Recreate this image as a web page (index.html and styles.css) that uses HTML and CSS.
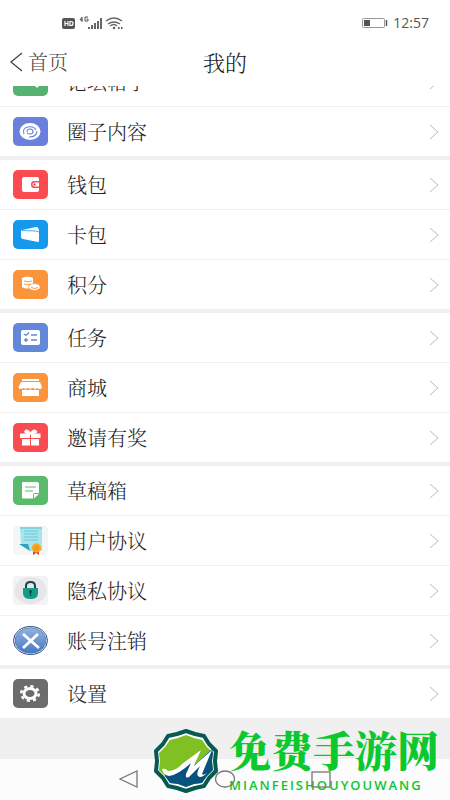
FILE: index.html
```html
<!DOCTYPE html>
<html lang="zh-CN">
<head>
<meta charset="utf-8">
<meta name="viewport" content="width=device-width, initial-scale=1">
<title>我的</title>
<link rel="stylesheet" href="styles.css">
</head>
<body>
<div class="screen">
  <div class="status">
    <svg class="signals" viewBox="0 0 62 16" aria-hidden="true">
      <rect x="0" y="2" width="13" height="11" rx="2" fill="#555"/>
      <path d="M3 5v5M6 5v5M3 7.5h3M8 5.5v4h1q2 0 2-2t-2-2z" fill="none" stroke="#fff" stroke-width="1.2"/>
      <path d="M20 1l-2 3h3M20 1v5M26 1h-3v4h3v-2h-1.500" fill="none" stroke="#555" stroke-width="1"/>
      <path d="M27 13v-2M30 13v-4M33 13v-6M36 13v-8M39 13V2" stroke="#666" stroke-width="2"/>
      <path d="M44 5q8-6 16 0M46 8q6-4 12 0M48 10q4-3 7 0" fill="none" stroke="#666" stroke-width="1.400"/>
      <circle cx="52" cy="12" r="1.200" fill="#555"/><path d="M56 12h1.500M59 12h1.500" stroke="#555" stroke-width="2"/>
    </svg>
    <div class="clock">
      <svg class="battery" viewBox="0 0 26 12" aria-hidden="true"><rect x=".5" y="1.500" width="22" height="9" rx="1" fill="none" stroke="#999"/><rect x="2" y="3" width="6" height="6" fill="#555"/><path d="M24.500 3v6" stroke="#555" stroke-width="1.500"/></svg>
      <span>12:57</span>
    </div>
  </div>
  <header class="bar">
    <a class="back" href="#"><svg viewBox="0 0 13 20" aria-hidden="true"><path d="M12 1L1 10l11 9" fill="none" stroke="#444" stroke-width="1.300"/></svg>首页</a>
    <h1>我的</h1>
  </header>
  <main class="list">
    <nav class="group scrolled">
      <a class="row" href="#"><svg class="icon" viewBox="0 0 35 29"><rect width="35" height="29" rx="5" fill="#56b271"/><path d="M9 6h17v13l-2 2-2-2H9z" fill="#fff"/></svg><span>论坛帖子</span><svg class="arrow" viewBox="0 0 10 16"><path d="M1 1l8 7-8 7"/></svg></a>
      <a class="row" href="#"><svg class="icon" viewBox="0 0 35 29"><rect width="35" height="29" rx="5" fill="#6a80dc"/><ellipse cx="17" cy="14.500" rx="10.500" ry="8.500" fill="#fff"/><path d="M11 17q-2-6 4-7 6-1 8 3M24 14q0 6-8 6M14 15q0-3 3-3t3 2.500-3 2.500q-2 0-3-1" fill="none" stroke="#6a80dc" stroke-width="1.100"/></svg><span>圈子内容</span><svg class="arrow" viewBox="0 0 10 16"><path d="M1 1l8 7-8 7"/></svg></a>
    </nav>
    <nav class="group">
      <a class="row" href="#"><svg class="icon" viewBox="0 0 35 29"><rect width="35" height="29" rx="5" fill="#fa4b50"/><rect x="9" y="7" width="17" height="15" rx="2" fill="#fff"/><path d="M27 11h-6q-3 0-3 3.500t3 3.500h6z" fill="#fa4b50"/><path d="M26 12.500h-4.500q-2 0-2 2t2 2H26z" fill="#fff"/><circle cx="21.500" cy="14.500" r="1.200" fill="#fa4b50"/></svg><span>钱包</span><svg class="arrow" viewBox="0 0 10 16"><path d="M1 1l8 7-8 7"/></svg></a>
      <a class="row" href="#"><svg class="icon" viewBox="0 0 35 29"><rect width="35" height="29" rx="5" fill="#1698ec"/><path d="M9 10l14-3q2-.5 2 1l1 2v11q0 1-1 1L10 19q-2 0-2-2v-6q0-1 1-1z" fill="#fff"/><path d="M9 10.500l14 .5 3 1" fill="none" stroke="#1698ec" stroke-width=".8"/></svg><span>卡包</span><svg class="arrow" viewBox="0 0 10 16"><path d="M1 1l8 7-8 7"/></svg></a>
      <a class="row" href="#"><svg class="icon" viewBox="0 0 35 29"><rect width="35" height="29" rx="5" fill="#fb943b"/><path d="M9 8q6-3 11 0v9q-6 3-11 0z" fill="#fff"/><path d="M11 11q4 1.500 8 0M11 14q4 1.500 7 0" fill="none" stroke="#fb943b" stroke-width=".9"/><path d="M16 15.500q5.500-4 11 0v3q-5.500 4-11 0z" fill="#fff" stroke="#fb943b" stroke-width=".7"/><path d="M18 17.500q4 2 7 0" fill="none" stroke="#fb943b"/></svg><span>积分</span><svg class="arrow" viewBox="0 0 10 16"><path d="M1 1l8 7-8 7"/></svg></a>
    </nav>
    <nav class="group">
      <a class="row" href="#"><svg class="icon" viewBox="0 0 35 29"><rect width="35" height="29" rx="5" fill="#6388d9"/><rect x="8" y="7" width="19" height="15" rx="2" fill="#fff"/><path d="M11 11l2 1.500 3-3M18 12h6M18 17h6" fill="none" stroke="#6388d9" stroke-width="1.300"/><circle cx="13" cy="17" r="1.800" fill="#6388d9"/></svg><span>任务</span><svg class="arrow" viewBox="0 0 10 16"><path d="M1 1l8 7-8 7"/></svg></a>
      <a class="row" href="#"><svg class="icon" viewBox="0 0 35 29"><rect width="35" height="29" rx="5" fill="#fb943b"/><path d="M9 6h17v2H9zM8 9h19l2 5q0 2-2 2t-3-1q-2 1.500-4.500 0-2 1.500-4.500 0-2 1.500-4.500 0-1 1-3 1t-2-2zM9 17q2 0 3-.5 2.500 1 5 0 3 1 5 0 2 .5 4 .5V23H9z" fill="#fff"/></svg><span>商城</span><svg class="arrow" viewBox="0 0 10 16"><path d="M1 1l8 7-8 7"/></svg></a>
      <a class="row" href="#"><svg class="icon" viewBox="0 0 35 29"><rect width="35" height="29" rx="5" fill="#fa4b50"/><path d="M7 10.500h10v4.500H7zM18 10.500h9.500v4.500H18zM9 16h8v6.500H9zM18 16h8v6.500h-8z" fill="#fff"/><path d="M17 10.500q-5 0-5-2 2-3 5.500 2 3-5 6-2 0 2-6 2" fill="#fff" stroke="#fff" stroke-width="1.500"/></svg><span>邀请有奖</span><svg class="arrow" viewBox="0 0 10 16"><path d="M1 1l8 7-8 7"/></svg></a>
    </nav>
    <nav class="group">
      <a class="row" href="#"><svg class="icon" viewBox="0 0 35 29"><rect width="35" height="29" rx="5" fill="#5bbb6c"/><path d="M10 6h14q2 0 2 2v9h-4q-2 0-2 2v3.500H10q-1 0-1-1V7q0-1 1-1zM26 18l-5 4.500V19q0-1 1-1z" fill="#fff"/><path d="M12 11h11M12 15h8" stroke="#5bbb6c" stroke-width="1.200"/></svg><span>草稿箱</span><svg class="arrow" viewBox="0 0 10 16"><path d="M1 1l8 7-8 7"/></svg></a>
      <a class="row" href="#"><svg class="icon" viewBox="0 0 35 29"><rect width="35" height="29" rx="4" fill="#f4f5f6"/><path d="M7 1h22v24H17l-9-7z" fill="#a5e5ec"/><path d="M7 1h22v2H7z" fill="#80d5df"/><path d="M11 5h14M11 8h14M11 11h14M11 14h14" stroke="#68bfcf" stroke-width=".8"/><path d="M6 18h9l2 7z" fill="#2f9fc2"/><path d="M20 22h6v7l-3-2-3 2z" fill="#e23d2c"/><circle cx="23.500" cy="22" r="4.700" fill="#f7ac22"/><circle cx="23.500" cy="22" r="2.800" fill="#f59820"/></svg><span>用户协议</span><svg class="arrow" viewBox="0 0 10 16"><path d="M1 1l8 7-8 7"/></svg></a>
      <a class="row" href="#"><svg class="icon" viewBox="0 0 35 29"><rect width="35" height="29" rx="4" fill="#f3f3f3"/><ellipse cx="17.500" cy="14.500" rx="16" ry="13.500" fill="#e6e6e8"/><path d="M13 12V10q0-4 4.500-4t4.500 4v2" fill="none" stroke="#12464f" stroke-width="2"/><path d="M10 12h15v5q0 6-7.500 6T10 17z" fill="#139b86"/><circle cx="17.500" cy="15.500" r="1.500" fill="#12464f"/><path d="M17.500 16v4" stroke="#12464f" stroke-width="1.300"/></svg><span>隐私协议</span><svg class="arrow" viewBox="0 0 10 16"><path d="M1 1l8 7-8 7"/></svg></a>
      <a class="row" href="#"><svg class="icon" viewBox="0 0 35 29"><defs><linearGradient id="blue" x1="0" y1="0" x2="0" y2="1"><stop offset="0" stop-color="#93b3df"/><stop offset="1" stop-color="#4679c4"/></linearGradient></defs><ellipse cx="17.500" cy="14.500" rx="17" ry="14" fill="#fff" stroke="#294b80"/><ellipse cx="17.500" cy="14.500" rx="15.500" ry="12.800" fill="url(#blue)" stroke="#476fac" stroke-width=".7"/><path d="M10 8l16 14M25 8L10 22" stroke="#fff" stroke-width="2.800"/></svg><span>账号注销</span><svg class="arrow" viewBox="0 0 10 16"><path d="M1 1l8 7-8 7"/></svg></a>
    </nav>
    <nav class="group">
      <a class="row" href="#"><svg class="icon" viewBox="0 0 35 29"><rect width="35" height="29" rx="5" fill="#6c6c6c"/><ellipse cx="17" cy="14.500" rx="8.800" ry="7.200" fill="none" stroke="#fff" stroke-width="2.500" stroke-dasharray="3.200 3.120"/><ellipse cx="17" cy="14.500" rx="6" ry="5" fill="none" stroke="#fff" stroke-width="3"/></svg><span>设置</span><svg class="arrow" viewBox="0 0 10 16"><path d="M1 1l8 7-8 7"/></svg></a>
    </nav>
  </main>
  <footer class="system">
    <svg viewBox="0 0 20 20" aria-hidden="true"><path d="M18 2v16L1 10z" fill="none" stroke="#777" stroke-width="1.300"/></svg>
    <svg viewBox="0 0 20 20" aria-hidden="true"><ellipse cx="10" cy="10" rx="9.500" ry="8" fill="none" stroke="#777" stroke-width="1.300"/></svg>
    <svg viewBox="0 0 20 20" aria-hidden="true"><rect x="1" y="3" width="18" height="15" fill="none" stroke="#777" stroke-width="1.300"/></svg>
  </footer>
  <div class="brand">
    <svg class="emblem" viewBox="0 0 66 64" aria-hidden="true">
      <path d="M33 2l9 3 9 2 5 8 7 7-1 10 1 10-7 7-5 8-9 2-9 3-9-3-9-2-5-8-7-7 1-10-1-10 7-7 5-8 9-2z" fill="#fff" stroke="#075a50" stroke-width="4" stroke-linejoin="round"/>
      <path d="M33 6l8 3 8 2 5 7 6 6-1 8 1 9-6 6-5 7-8 1-8 3-8-3-8-1-5-7-6-6 1-9-1-8 6-6 5-7 8-2z" fill="#80c022"/>
      <path d="M12 44q10 1 18-7l16-13-4 12 17-16 1 4-1 8 1 9-6 6-5 7-8 1-8 3-8-3-8-1-5-7z" fill="#07527e"/>
      <path d="M9 40q4-1 6 2 8 0 14-7l19-14-7 16 18-16-10 24q1 2 5-1-6 6-9 3-2-2 2-10L36 48q-4 2-3-3l5-11Q25 46 16 47q-6-1-7-7z" fill="#fff"/>
    </svg>
    <div class="name"><strong>免费手游网</strong><small>MIANFEISHOUYOUWANG</small></div>
  </div>
</div>
</body>
</html>
```
FILE: styles.css
```css
* { box-sizing: border-box; }
body {
  margin: 0;
  background: #f0f0f0;
  color: #222;
  font-family: "Noto Serif CJK SC", "Noto Sans CJK SC", serif;
  font-weight: 300;
}
a { color: inherit; text-decoration: none; }
.screen {
  position: relative;
  display: flex;
  flex-direction: column;
  height: 100vh;
  overflow: hidden;
}
.status {
  display: flex;
  justify-content: space-between;
  align-items: flex-end;
  height: 32px;
  padding: 0 21px 0 62px;
  background: #fff;
  flex: none;
}
.signals { width: 62px; height: 16px; }
.clock {
  display: flex;
  align-items: center;
  gap: 5px;
  font: 14px/18px "Open Sans", sans-serif;
  color: #555;
}
.battery { width: 26px; height: 12px; }
.bar {
  display: grid;
  grid-template-columns: 1fr auto 1fr;
  align-items: center;
  height: 54px;
  padding: 6px 10px 0;
  background: #fff;
  flex: none;
}
.back { display: flex; align-items: center; gap: 5px; font-size: 20px; line-height: 28px; color: #444; }
.back svg { width: 13px; height: 20px; }
h1 { margin: 0; font-size: 22px; line-height: 28px; font-weight: 300; }
.list {
  display: flex;
  flex-direction: column;
  gap: 4px;
  flex: 1;
  overflow: hidden;
}
.group { background: #fff; flex: none; }
.scrolled { margin-top: -29px; }
.row {
  display: flex;
  align-items: center;
  height: 49px;
  padding: 0 11px 0 13px;
  font-size: 20px;
  line-height: 28px;
}
.row + .row { height: 50px; border-top: 1px solid #f1f1f1; }
.row span { flex: 1; }
.icon { width: 35px; height: 29px; margin-right: 19px; flex: none; }
.arrow { width: 10px; height: 16px; fill: none; stroke: #bbb; flex: none; }
.system {
  display: flex;
  justify-content: center;
  gap: 76px;
  height: 41px;
  padding-top: 10px;
  background: #fcfcfc;
  flex: none;
}
.system svg { position: relative; z-index: 1; width: 20px; height: 20px; }
.brand {
  position: absolute;
  right: 11px;
  bottom: 6px;
  display: flex;
  align-items: center;
  gap: 10px;
  color: #0bc82f;
}
.emblem { width: 66px; height: 66px; position: relative; z-index: 2; }
.name { display: flex; flex-direction: column; gap: 6px; }
.name strong { font: 900 42px/42px "Noto Serif CJK SC", "Noto Sans CJK SC", serif; }
.name small { font: 600 13px/18px "Open Sans", sans-serif; letter-spacing: 2px; }
```
